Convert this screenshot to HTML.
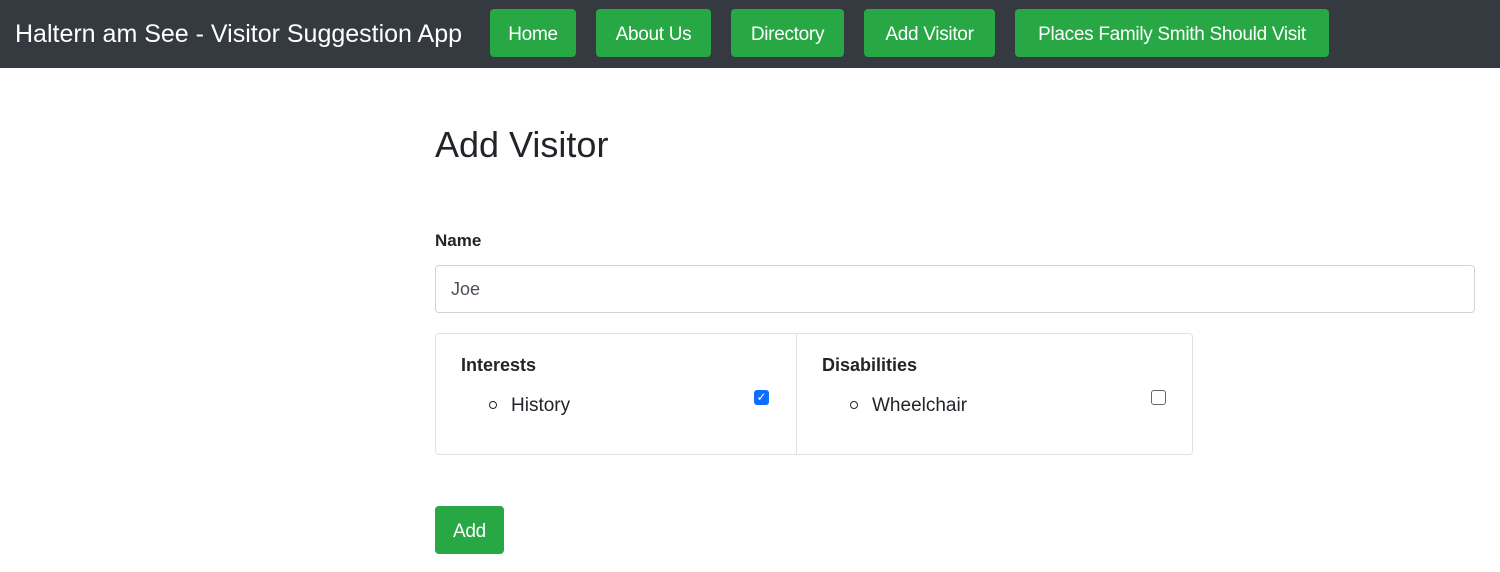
<!DOCTYPE html>
<html><head><style>
*{box-sizing:border-box;margin:0;padding:0}
body{width:1500px;height:572px;background:#fff;font-family:"Liberation Sans",sans-serif;color:#212529;position:relative;overflow:hidden}
.nav{position:absolute;left:0;top:0;width:1500px;height:68px;background:#343a40}
.brand{position:absolute;left:15px;top:20px;color:#fff;font-size:25px;letter-spacing:0px;white-space:nowrap}
.btn{position:absolute;background:#28a745;color:#fff;border-radius:4px;font-size:19px;display:flex;align-items:center;justify-content:center;white-space:nowrap;letter-spacing:-0.3px;padding-top:3px}
.nb{top:9px;height:48px}
.abs{position:absolute;white-space:nowrap}
</style></head><body>
<div class="nav">
<div class="brand">Haltern am See - Visitor Suggestion App</div>
<div class="btn nb" style="left:490px;width:86px">Home</div>
<div class="btn nb" style="left:596px;width:115px">About Us</div>
<div class="btn nb" style="left:731px;width:113px">Directory</div>
<div class="btn nb" style="left:864px;width:131px">Add Visitor</div>
<div class="btn nb" style="left:1015px;width:314px">Places Family Smith Should Visit</div>
</div>
<div class="abs" style="left:435px;top:124px;font-size:36px;font-weight:500;letter-spacing:0px">Add Visitor</div>
<div class="abs" style="left:435px;top:231px;font-size:17px;font-weight:bold">Name</div>
<div class="abs" style="left:435px;top:265px;width:1040px;height:48px;border:1px solid #ced4da;border-radius:4px;padding:13px 15px;font-size:18px;color:#495057">Joe</div>
<div class="abs" style="left:435px;top:333px;width:758px;height:122px;border:1px solid #dee2e6;border-radius:4px"></div>
<div class="abs" style="left:796px;top:334px;width:1px;height:120px;background:#dee2e6"></div>
<div class="abs" style="left:461px;top:355px;font-size:18px;font-weight:bold">Interests</div>
<div class="abs" style="left:489px;top:401px;width:8px;height:8px;border:1px solid #212529;border-radius:50%"></div>
<div class="abs" style="left:511px;top:395px;font-size:19px">History</div>
<div class="abs" style="left:754px;top:390px;width:15px;height:15px;background:#0d6efd;border-radius:3px;color:#fff;font-size:12px;line-height:15px;text-align:center">✓</div>
<div class="abs" style="left:822px;top:355px;font-size:18px;font-weight:bold">Disabilities</div>
<div class="abs" style="left:850px;top:401px;width:8px;height:8px;border:1px solid #212529;border-radius:50%"></div>
<div class="abs" style="left:872px;top:395px;font-size:19px">Wheelchair</div>
<div class="abs" style="left:1151px;top:390px;width:15px;height:15px;border:1px solid #666;border-radius:3px"></div>
<div class="btn" style="left:435px;top:506px;width:69px;height:48px">Add</div>
</body></html>
